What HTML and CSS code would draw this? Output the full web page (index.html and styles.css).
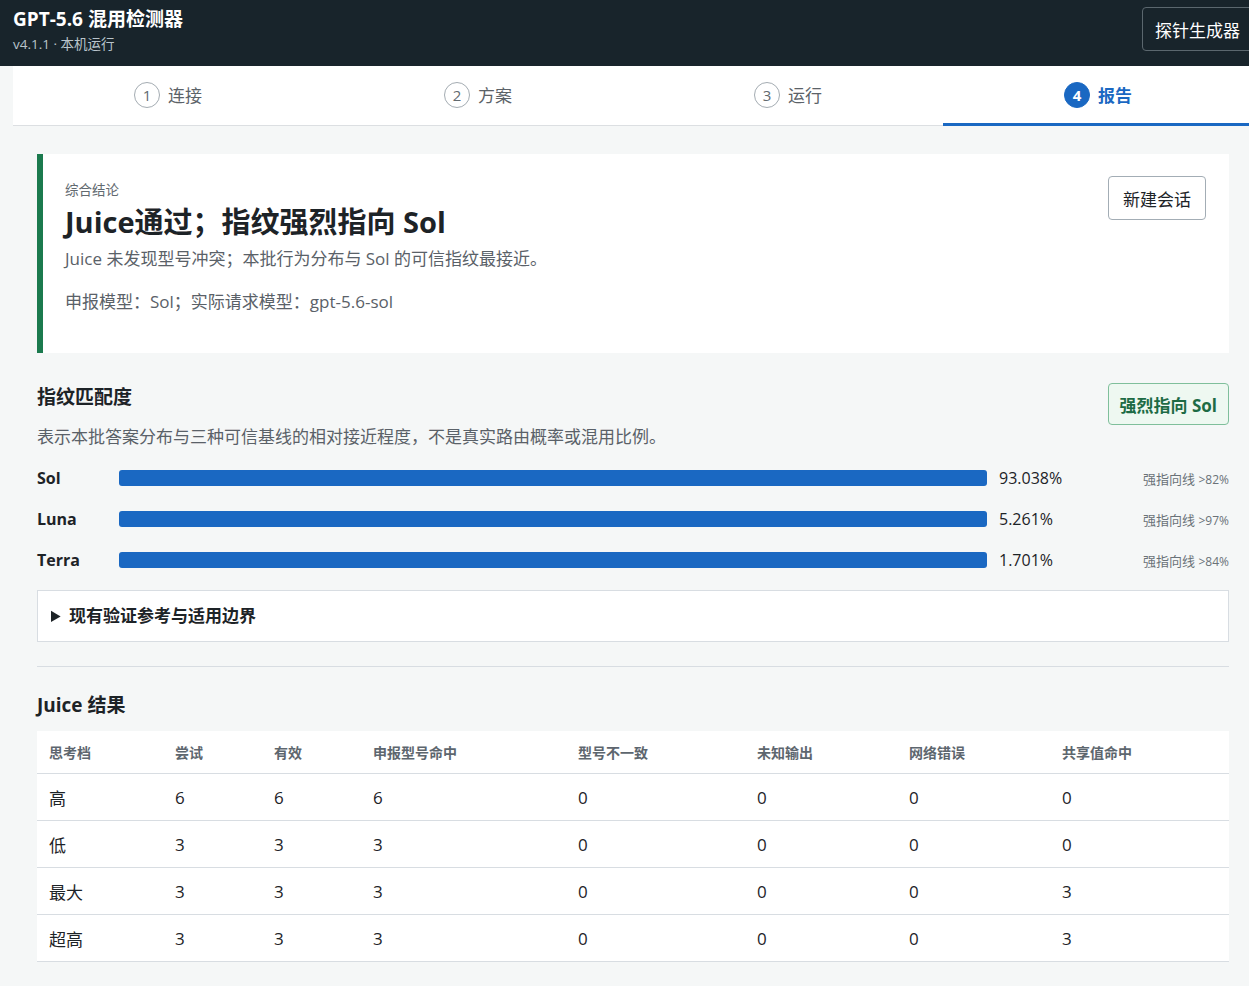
FILE: index.html
```html
<!DOCTYPE html>
<html lang="zh-CN">
<head>
  <meta charset="UTF-8" />
  <title>GPT-5.6 混用检测器</title>
  <link rel="stylesheet" href="styles.css">
</head>
<body>
<div class="page">

  <!-- Header -->
  <header class="topbar">
    <div class="brand">
      <div class="brand-title">GPT-5.6 混用检测器</div>
      <div class="brand-sub">v4.1.1 · 本机运行</div>
    </div>
    <button class="btn-dark">探针生成器</button>
  </header>

  <!-- Steps -->
  <nav class="steps">
    <div class="step"><span class="step-num">1</span><span class="step-label">连接</span></div>
    <div class="step"><span class="step-num">2</span><span class="step-label">方案</span></div>
    <div class="step"><span class="step-num">3</span><span class="step-label">运行</span></div>
    <div class="step active"><span class="step-num">4</span><span class="step-label">报告</span></div>
  </nav>

  <main class="main">

    <!-- Verdict -->
    <section class="verdict">
      <div class="verdict-body">
        <div class="eyebrow">综合结论</div>
        <h1 class="verdict-title">Juice通过；指纹强烈指向 Sol</h1>
        <p class="verdict-desc">Juice 未发现型号冲突；本批行为分布与 Sol 的可信指纹最接近。</p>
        <p class="verdict-meta">申报模型：Sol；实际请求模型：gpt-5.6-sol</p>
      </div>
      <button class="btn">新建会话</button>
    </section>

    <!-- Fingerprint -->
    <section class="fp">
      <div class="fp-head">
        <h2 class="section-title">指纹匹配度</h2>
        <span class="badge">强烈指向 Sol</span>
      </div>
      <p class="fp-desc">表示本批答案分布与三种可信基线的相对接近程度，不是真实路由概率或混用比例。</p>

      <div class="bars">
        <div class="bar-name">Sol</div>
        <div class="bar-track"><div class="bar-fill"></div></div>
        <div class="bar-value">93.038%</div>
        <div class="bar-line">强指向线 <small>&gt;82%</small></div>

        <div class="bar-name">Luna</div>
        <div class="bar-track"><div class="bar-fill"></div></div>
        <div class="bar-value">5.261%</div>
        <div class="bar-line">强指向线 <small>&gt;97%</small></div>

        <div class="bar-name">Terra</div>
        <div class="bar-track"><div class="bar-fill"></div></div>
        <div class="bar-value">1.701%</div>
        <div class="bar-line">强指向线 <small>&gt;84%</small></div>
      </div>

      <details class="refs">
        <summary>现有验证参考与适用边界</summary>
      </details>
    </section>

    <hr class="divider" />

    <!-- Results table -->
    <section class="results">
      <h2 class="section-title">Juice 结果</h2>
      <table class="result-table">
        <colgroup>
          <col class="c1"><col class="c2"><col class="c3"><col class="c4">
          <col class="c5"><col class="c6"><col class="c7"><col class="c8">
        </colgroup>
        <thead>
          <tr>
            <th>思考档</th><th>尝试</th><th>有效</th><th>申报型号命中</th>
            <th>型号不一致</th><th>未知输出</th><th>网络错误</th><th>共享值命中</th>
          </tr>
        </thead>
        <tbody>
          <tr><td>高</td><td>6</td><td>6</td><td>6</td><td>0</td><td>0</td><td>0</td><td>0</td></tr>
          <tr><td>低</td><td>3</td><td>3</td><td>3</td><td>0</td><td>0</td><td>0</td><td>0</td></tr>
          <tr><td>最大</td><td>3</td><td>3</td><td>3</td><td>0</td><td>0</td><td>0</td><td>3</td></tr>
          <tr><td>超高</td><td>3</td><td>3</td><td>3</td><td>0</td><td>0</td><td>0</td><td>3</td></tr>
        </tbody>
      </table>
    </section>

  </main>
</div>
</body>
</html>
```

FILE: styles.css
```css
html, body {
  margin: 0;
  overflow: hidden;
}

body {
  font-family: "Open Sans", "Noto Sans CJK SC", sans-serif;
  background-color: #f5f7f7;
  color: #1d2327;
}

.page {
  width: 1266px;
}

/* Header */
.topbar {
  height: 66px;
  background-color: #18242b;
  padding: 0 13px;
  display: flex;
  justify-content: space-between;
  align-items: center;
  box-sizing: border-box;
}

.brand-title {
  color: #fff;
  font-size: 19px;
  font-weight: 700;
  line-height: 24px;
  margin-top: -6px;
}

.brand-sub {
  color: #b9c4cb;
  font-size: 13.5px;
  line-height: 18px;
  margin-top: 4px;
}

.btn-dark {
  font-family: inherit;
  font-size: 17px;
  color: #fff;
  background: transparent;
  border: 1px solid #5b676e;
  border-radius: 4px;
  height: 44px;
  padding: 0 12px;
  margin-top: -8px;
}

/* Steps */
.steps {
  margin: 0 13px;
  height: 60px;
  background-color: #fff;
  border-bottom: 1px solid #dcdfe2;
  display: grid;
  grid-template-columns: repeat(4, 1fr);
  box-sizing: border-box;
}

.step {
  display: flex;
  align-items: center;
  justify-content: center;
  gap: 8px;
  color: #5b6268;
  font-size: 17px;
  padding-bottom: 2px;
}

.step-num {
  width: 26px;
  height: 26px;
  border: 1px solid #a4acb2;
  border-radius: 50%;
  box-sizing: border-box;
  display: flex;
  align-items: center;
  justify-content: center;
  font-size: 15px;
  color: #626a70;
}

.step.active {
  border-bottom: 3px solid #1a68c2;
  padding-bottom: 0;
  margin-bottom: -1px;
  color: #1a68c2;
  font-weight: 700;
}

.step.active .step-num {
  background-color: #1a68c2;
  border-color: #1a68c2;
  color: #fff;
  font-weight: 700;
}

/* Main */
.main {
  margin: 0 13px;
  padding: 28px 24px 40px;
}

.verdict {
  background-color: #fff;
  border-left: 6px solid #1b7a4e;
  padding: 22px 23px 26px 22px;
  display: flex;
  justify-content: space-between;
  align-items: flex-start;
  min-height: 199px;
  box-sizing: border-box;
}

.eyebrow {
  font-size: 13.5px;
  color: #626a70;
  margin-top: 5px;
  line-height: 18px;
}

.verdict-title {
  font-size: 29px;
  font-weight: 700;
  margin: 4px 0 0;
  line-height: 38px;
}

.verdict-desc,
.verdict-meta {
  font-size: 17px;
  color: #5a6168;
  margin: 6px 0 0;
  line-height: 24px;
}

.verdict-meta {
  margin-top: 19px;
}

.btn {
  font-family: inherit;
  font-size: 17px;
  color: #1d2327;
  background: #fff;
  border: 1px solid #a3adb5;
  border-radius: 4px;
  height: 44px;
  padding: 0 14px;
}

/* Fingerprint */
.fp {
  margin-top: 30px;
}

.fp-head {
  display: flex;
  justify-content: space-between;
  align-items: center;
}

.section-title {
  font-size: 19px;
  font-weight: 700;
  margin: 0;
}

.fp-head .section-title {
  margin-top: -16px;
}

.badge {
  background-color: #eef8f1;
  border: 1px solid #7fbf9b;
  border-radius: 4px;
  color: #1d6b45;
  font-size: 17px;
  font-weight: 700;
  height: 42px;
  padding: 0 11px;
  display: flex;
  align-items: center;
  box-sizing: border-box;
}

.fp-desc {
  font-size: 17px;
  color: #5a6168;
  margin: 0;
  line-height: 24px;
}

.bars {
  display: grid;
  grid-template-columns: 70px 1fr 130px 88px;
  column-gap: 12px;
  row-gap: 17px;
  align-items: center;
  margin-top: 17px;
}

.bar-name {
  font-size: 16px;
  font-weight: 700;
  line-height: 24px;
}

.bar-track {
  height: 16px;
}

.bar-fill {
  height: 16px;
  background-color: #1a68c2;
  border-radius: 3px;
}

.bar-value {
  font-size: 16px;
  line-height: 24px;
}

.bar-line {
  font-size: 13px;
  color: #6a7278;
  text-align: right;
  white-space: nowrap;
}

.bar-line small {
  font-size: 12px;
}

.refs {
  margin-top: 18px;
  background-color: #fff;
  border: 1px solid #d8dde2;
}

.refs summary {
  font-size: 17px;
  font-weight: 700;
  padding: 12px 13px;
  line-height: 26px;
  cursor: pointer;
}

.divider {
  border: 0;
  border-top: 1px solid #d8dde2;
  margin: 24px 0 0;
}

/* Results */
.results {
  margin-top: 23px;
}

.result-table {
  width: 100%;
  margin-top: 13px;
  border-collapse: collapse;
  background-color: #fff;
  table-layout: fixed;
}

.c1 { width: 126px; }
.c2 { width: 99px; }
.c3 { width: 99px; }
.c4 { width: 205px; }
.c5 { width: 179px; }
.c6 { width: 152px; }
.c7 { width: 153px; }
.c8 { width: 179px; }

.result-table th {
  text-align: left;
  font-size: 14px;
  font-weight: 700;
  color: #5d666e;
  height: 42px;
  padding: 0 12px;
  border-bottom: 1px solid #d8dde2;
}

.result-table td {
  font-size: 17px;
  height: 46px;
  padding: 0 12px;
  border-bottom: 1px solid #d8dde2;
}
```
